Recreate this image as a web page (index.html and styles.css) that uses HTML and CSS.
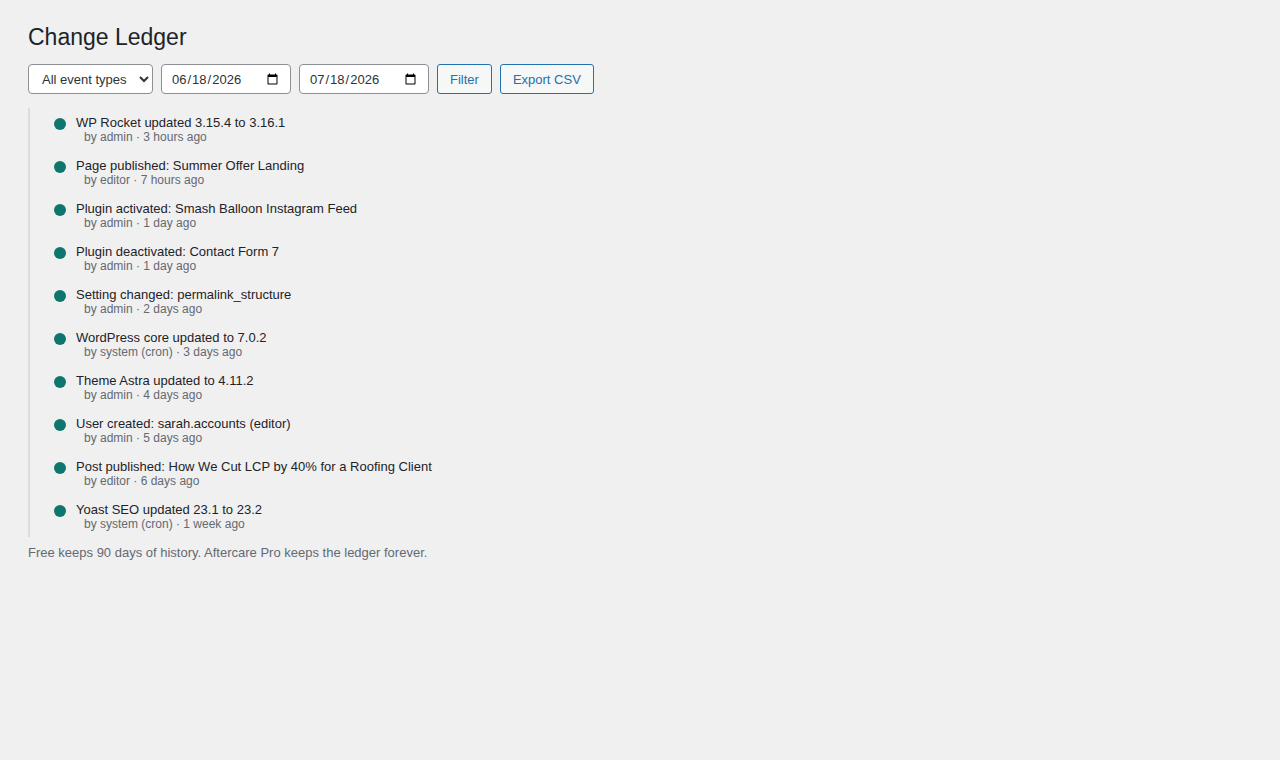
FILE: index.html
```html
<!DOCTYPE html>
<html lang="en">
<head>
    <meta charset="UTF-8">
    <meta name="viewport" content="width=device-width, initial-scale=1.0">
    <title>Change Ledger</title>
    <link rel="stylesheet" href="styles.css">
</head>
<body>
    <div class="wrap">
        <h1>Change Ledger</h1>

        <form class="ledger-filters">
            <select class="field" name="type">
                <option>All event types</option>
                <option>Plugins</option>
                <option>Themes</option>
                <option>Core</option>
                <option>Content</option>
                <option>Settings</option>
                <option>Users</option>
            </select>
            <input type="date" class="field" name="from" value="2026-06-18">
            <input type="date" class="field" name="to" value="2026-07-18">
            <button type="submit" class="button">Filter</button>
            <button type="button" class="button">Export CSV</button>
        </form>

        <ul class="ledger">
            <li class="ledger-item">
                <span class="dot"></span>
                <div>
                    <div class="ledger-title">WP Rocket updated 3.15.4 to 3.16.1</div>
                    <div class="ledger-meta">by admin · 3 hours ago</div>
                </div>
            </li>
            <li class="ledger-item">
                <span class="dot"></span>
                <div>
                    <div class="ledger-title">Page published: Summer Offer Landing</div>
                    <div class="ledger-meta">by editor · 7 hours ago</div>
                </div>
            </li>
            <li class="ledger-item">
                <span class="dot"></span>
                <div>
                    <div class="ledger-title">Plugin activated: Smash Balloon Instagram Feed</div>
                    <div class="ledger-meta">by admin · 1 day ago</div>
                </div>
            </li>
            <li class="ledger-item">
                <span class="dot"></span>
                <div>
                    <div class="ledger-title">Plugin deactivated: Contact Form 7</div>
                    <div class="ledger-meta">by admin · 1 day ago</div>
                </div>
            </li>
            <li class="ledger-item">
                <span class="dot"></span>
                <div>
                    <div class="ledger-title">Setting changed: permalink_structure</div>
                    <div class="ledger-meta">by admin · 2 days ago</div>
                </div>
            </li>
            <li class="ledger-item">
                <span class="dot"></span>
                <div>
                    <div class="ledger-title">WordPress core updated to 7.0.2</div>
                    <div class="ledger-meta">by system (cron) · 3 days ago</div>
                </div>
            </li>
            <li class="ledger-item">
                <span class="dot"></span>
                <div>
                    <div class="ledger-title">Theme Astra updated to 4.11.2</div>
                    <div class="ledger-meta">by admin · 4 days ago</div>
                </div>
            </li>
            <li class="ledger-item">
                <span class="dot"></span>
                <div>
                    <div class="ledger-title">User created: sarah.accounts (editor)</div>
                    <div class="ledger-meta">by admin · 5 days ago</div>
                </div>
            </li>
            <li class="ledger-item">
                <span class="dot"></span>
                <div>
                    <div class="ledger-title">Post published: How We Cut LCP by 40% for a Roofing Client</div>
                    <div class="ledger-meta">by editor · 6 days ago</div>
                </div>
            </li>
            <li class="ledger-item">
                <span class="dot"></span>
                <div>
                    <div class="ledger-title">Yoast SEO updated 23.1 to 23.2</div>
                    <div class="ledger-meta">by system (cron) · 1 week ago</div>
                </div>
            </li>
        </ul>

        <p class="ledger-note">Free keeps 90 days of history. Aftercare Pro keeps the ledger forever.</p>
    </div>
</body>
</html>
```

FILE: styles.css
```css
:root {
    --bg: #f0f0f1;
    --text: #1d2327;
    --muted: #646970;
    --line: #dcdcde;
    --accent: #2271b1;
    --dot: #0f766e;
}

* {
    margin: 0;
    padding: 0;
    box-sizing: border-box;
}

body {
    background-color: var(--bg);
    color: var(--text);
    font-family: "Liberation Sans", Arial, sans-serif;
    font-size: 13px;
}

.wrap {
    padding: 22px 28px;
}

h1 {
    font-size: 23px;
    font-weight: 400;
    line-height: 30px;
    margin-bottom: 12px;
}

/* Filter bar */
.ledger-filters {
    display: flex;
    gap: 8px;
    align-items: center;
}

.field {
    height: 30px;
    border: 1px solid #8c8f94;
    border-radius: 4px;
    background-color: #fff;
    color: #2c3338;
    font-family: inherit;
    font-size: 13px;
    padding: 0 9px;
}

select.field {
    width: 125px;
    padding: 0 4px 0 9px;
}

input[type="date"].field {
    width: 130px;
}

.button {
    height: 30px;
    padding: 0 12px;
    border: 1px solid var(--accent);
    border-radius: 3px;
    background-color: #f6f7f7;
    color: var(--accent);
    font-family: inherit;
    font-size: 13px;
    cursor: pointer;
}

/* Timeline */
.ledger {
    list-style: none;
    margin-top: 14px;
    padding: 6px 0 6px 24px;
    border-left: 2px solid var(--line);
}

.ledger-item {
    display: flex;
    align-items: flex-start;
    gap: 10px;
    margin-bottom: 13px;
}

.ledger-item:last-child {
    margin-bottom: 0;
}

.dot {
    flex: none;
    width: 12px;
    height: 12px;
    margin-top: 4px;
    border-radius: 50%;
    background-color: var(--dot);
}

.ledger-title {
    line-height: 17px;
}

.ledger-meta {
    padding-left: 8px;
    font-size: 12px;
    line-height: 13px;
    color: var(--muted);
}

.ledger-note {
    margin-top: 8px;
    line-height: 16px;
    color: var(--muted);
}
```
